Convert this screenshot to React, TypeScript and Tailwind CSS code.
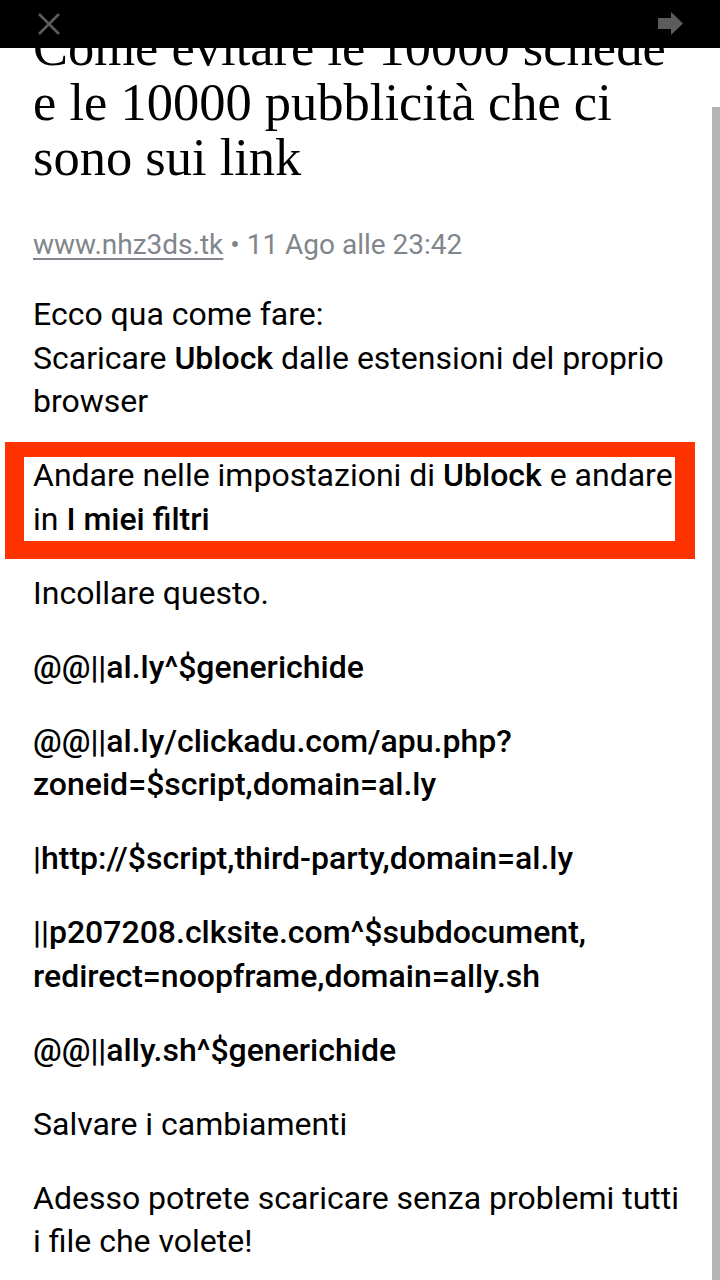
import React from "react";

const sans = "font-['Roboto','Liberation_Sans',sans-serif]";

export default function App() {
  return (
    <div className="relative h-[1280px] w-[720px] overflow-hidden bg-white">
      {/* top bar */}
      <div className="absolute left-0 right-0 top-0 z-20 flex h-12 items-center justify-between bg-black pl-[37px] pr-[36px]">
        <svg width="24" height="24" viewBox="0 0 24 24">
          <path d="M2 2 L22 22 M22 2 L2 22" stroke="#5c5c5c" strokeWidth="2.6" fill="none" />
        </svg>
        <svg width="26" height="24" viewBox="0 0 26 24">
          <polygon points="0,6 13,6 13,0 25,11.5 13,23 13,17 0,17" fill="#5c5c5c" />
        </svg>
      </div>

      {/* scrollbar */}
      <div className="absolute bottom-0 right-0 top-[107px] z-20 w-2 bg-[#b4b4b4]" />

      <main className={`px-[33px] pt-[20px] text-black ${sans}`}>
        <h1 className="font-['Liberation_Serif','DejaVu_Serif',serif] text-[52.5px] leading-[55px] font-normal text-black">
          Come evitare le 10000 schede e le 10000 pubblicità che ci sono sui link
        </h1>

        <p className="mt-[42px] text-[28px] leading-[36px] text-[#80868b]">
          <span className="underline underline-offset-[4px]">www.nhz3ds.tk</span> • 11 Ago alle 23:42
        </p>

        <div className="mt-[30px] text-[32px] leading-[43.5px]">
          <p className="mb-[30.5px]">
            Ecco qua come fare:
            <br />
            Scaricare <span className="font-medium">Ublock</span> dalle estensioni del proprio browser
          </p>

          <div className="relative mb-[30.5px]">
            <p>
              Andare nelle impostazioni di <span className="font-medium">Ublock</span> e andare in{" "}
              <span className="font-medium">I miei filtri</span>
            </p>
            <div className="pointer-events-none absolute bottom-[-18px] left-[-28px] right-[-8px] top-[-12px] border-b-[18px] border-l-[19px] border-r-[20px] border-t-[15px] border-[#ff3300]" />
          </div>

          <p className="mb-[30.5px]">Incollare questo.</p>
          <p className="mb-[30.5px] font-medium">@@||al.ly^$generichide</p>
          <p className="mb-[30.5px] font-medium">
            @@||al.ly/clickadu.com/apu.php?
            <br />
            zoneid=$script,domain=al.ly
          </p>
          <p className="mb-[30.5px] font-medium">|http://$script,third-party,domain=al.ly</p>
          <p className="mb-[30.5px] font-medium">
            ||p207208.clksite.com^$subdocument,
            <br />
            redirect=noopframe,domain=ally.sh
          </p>
          <p className="mb-[30.5px] font-medium">@@||ally.sh^$generichide</p>
          <p className="mb-[30.5px]">Salvare i cambiamenti</p>
          <p className="mb-[30.5px]">Adesso potrete scaricare senza problemi tutti i file che volete!</p>
        </div>
      </main>
    </div>
  );
}
